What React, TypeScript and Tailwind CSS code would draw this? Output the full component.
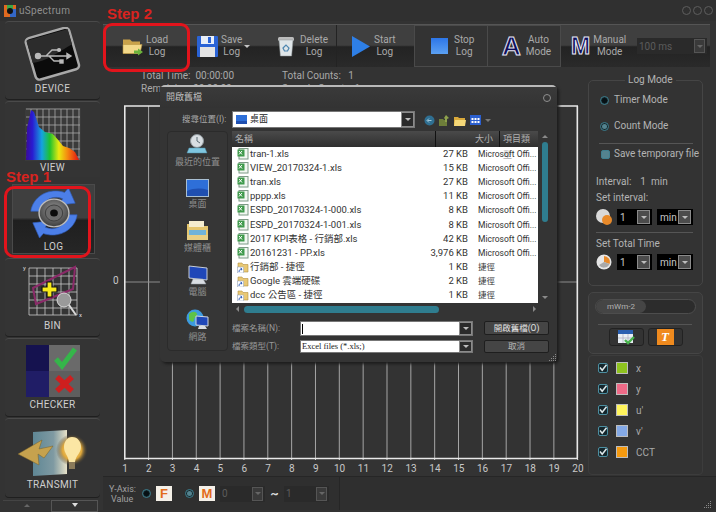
import type { ReactNode } from "react";

const uiFont = "font-['Roboto','Noto_Sans_CJK_TC',sans-serif]";

const files = [
  { name: "tran-1.xls", size: "27 KB", kind: "Microsoft Offi..." },
  { name: "VIEW_20170324-1.xls", size: "15 KB", kind: "Microsoft Offi..." },
  { name: "tran.xls", size: "27 KB", kind: "Microsoft Offi..." },
  { name: "pppp.xls", size: "11 KB", kind: "Microsoft Offi..." },
  { name: "ESPD_20170324-1-000.xls", size: "8 KB", kind: "Microsoft Offi..." },
  { name: "ESPD_20170324-1-001.xls", size: "8 KB", kind: "Microsoft Offi..." },
  { name: "2017 KPI表格 - 行銷部.xls", size: "42 KB", kind: "Microsoft Offi..." },
  { name: "20161231 - PP.xls", size: "3,976 KB", kind: "Microsoft Offi..." },
  { name: "行銷部 - 捷徑", size: "1 KB", kind: "捷徑", link: true },
  { name: "Google 雲端硬碟", size: "2 KB", kind: "捷徑", link: true },
  { name: "dcc 公告區 - 捷徑", size: "1 KB", kind: "捷徑", link: true },
];

const ticks = Array.from({ length: 20 }, (_, i) => i + 1);

function XlsIcon() {
  return (
    <svg width="12" height="12" viewBox="0 0 12 12" className="shrink-0">
      <rect x="2" y="0.5" width="9" height="10.5" fill="#f2f7f2" stroke="#7d9a86" />
      <rect x="0.5" y="1.5" width="7" height="7" fill="#3f9a4c" />
      <path d="M2 3l3 3.5M5 3L2 6.5" stroke="#fff" strokeWidth="1" />
    </svg>
  );
}

function LinkIcon() {
  return (
    <svg width="12" height="13" viewBox="0 0 12 13" className="shrink-0">
      <path d="M1 3h4l1 1.5h5V12H1z" fill="#e9c874" stroke="#b3913f" strokeWidth="0.6" />
      <rect x="0.5" y="7" width="6" height="6" fill="#fff" stroke="#8ca0c0" strokeWidth="0.5" />
      <path d="M2 12c0-2 1-3 3-3M5 9l-1.4-.8M5 9l-.8 1.4" stroke="#1d4fb8" strokeWidth="0.9" fill="none" />
    </svg>
  );
}

function ComboArrow({ dark }: { dark?: boolean }) {
  return (
    <span className={`flex h-full w-[13px] shrink-0 items-center justify-center border border-[#8b8b8b] ${dark ? "bg-[#2b2b2b]" : "bg-[#4c4c4c]"}`}>
      <span className="h-0 w-0 border-x-[3px] border-t-[3px] border-x-transparent border-t-[#bdbdbd]" />
    </span>
  );
}

function BlackCombo({ value, w, h = "h-[16px]" }: { value: string; w: string; h?: string }) {
  return (
    <div className={`flex ${w} ${h} items-center justify-between bg-black pl-[3px] pr-[2px] py-[1px] text-[10px] text-[#c8c8c8]`}>
      <span>{value}</span>
      <ComboArrow />
    </div>
  );
}

function DimCombo({ value, w }: { value: string; w: string }) {
  return (
    <div className={`flex ${w} h-[16px] items-center justify-between bg-[#2a2a2a] pl-[2px] pr-[2px] py-[1px] text-[10px] text-[#5c5c5c]`}>
      <span>{value}</span>
      <span className="flex h-full w-[11px] items-center justify-center border border-[#555] bg-[#3a3a3a]">
        <span className="h-0 w-0 border-x-[3px] border-t-[3px] border-x-transparent border-t-[#666]" />
      </span>
    </div>
  );
}

function Radio({ on }: { on?: boolean }) {
  return (
    <span className="flex h-[9px] w-[9px] shrink-0 items-center justify-center rounded-full border border-[#3f7f8f] bg-[#17272c]">
      <span className={`h-[5px] w-[5px] rounded-full ${on ? "bg-[#061014]" : "bg-[#54838f]"}`} />
    </span>
  );
}

function CheckMark() {
  return (
    <svg width="10" height="10" viewBox="0 0 10 10" className="shrink-0">
      <rect x="0.5" y="0.5" width="9" height="9" rx="1.5" fill="#14262c" stroke="#4c8ea0" />
      <path d="M2 4.5l2.2 2.8L8.5 1.8" stroke="#dfe8ea" strokeWidth="1.5" fill="none" />
    </svg>
  );
}

function Grip() {
  return (
    <svg width="8" height="8" viewBox="0 0 8 8" className="absolute">
      <path d="M6 0h1v1H6zM4 2h1v1H4zM6 2h1v1H6zM2 4h1v1H2zM4 4h1v1H4zM6 4h1v1H6zM0 6h1v1H0zM2 6h1v1H2zM4 6h1v1H4zM6 6h1v1H6z" fill="#8a8a8a" />
    </svg>
  );
}

function DeviceIcon() {
  return (
    <svg width="58" height="54" viewBox="0 0 58 54">
      <g transform="rotate(-16 29 27)">
        <rect x="6" y="5" width="45" height="43" rx="4" fill="#0b0b0b" stroke="#a9a9a9" strokeWidth="2.5" />
        <path d="M7 7h43v16C36 26 20 33 7 30z" fill="#2c2c2c" />
      </g>
      <g stroke="#b9b9b9" strokeWidth="1.4" fill="#b9b9b9">
        <path d="M15 29h28M22 29l6-6h6M25 29l5 5h6" fill="none" />
        <circle cx="14" cy="29" r="2.5" />
        <circle cx="35" cy="23" r="1.4" />
        <rect x="36" y="33" width="3" height="3" />
        <path d="M43 26.5l4 2.5-4 2.5z" />
      </g>
    </svg>
  );
}

function ViewIcon() {
  return (
    <svg width="56" height="53" viewBox="0 0 56 53">
      <defs>
        <linearGradient id="spec" x1="0" x2="1" y1="0" y2="0">
          <stop offset="0" stopColor="#3a0a9a" />
          <stop offset="0.12" stopColor="#2a1ad0" />
          <stop offset="0.3" stopColor="#14a4e0" />
          <stop offset="0.45" stopColor="#1ec22e" />
          <stop offset="0.62" stopColor="#e8ea10" />
          <stop offset="0.78" stopColor="#f58a10" />
          <stop offset="1" stopColor="#e01010" />
        </linearGradient>
      </defs>
      <rect width="56" height="53" fill="#3a3a3a" />
      <path d="M6 52V1M12 52V1M18 52V1M24 52V1M30 52V1M36 52V1M42 52V1M48 52V1M54 52V1M1 1H55M1 9H55M1 17H55M1 25H55M1 33H55M1 41H55M1 49H55" stroke="#a8a8a8" strokeWidth="0.8" />
      <path d="M1 52L2 20L6 2L9 4L14 19L20 24L28 26L34 33L38 38L44 40L50 44L54 52z" fill="url(#spec)" />
    </svg>
  );
}

function LogIcon() {
  return (
    <svg width="54" height="50" viewBox="0 0 56 56" preserveAspectRatio="none">
      <defs>
        <radialGradient id="lens" cx="0.5" cy="0.4" r="0.6">
          <stop offset="0" stopColor="#9a9a9a" />
          <stop offset="1" stopColor="#3d3d3d" />
        </radialGradient>
      </defs>
      <path d="M4 26C6 10 22 -1 39 5L43 0L50 17L33 19L37 12C25 7 16 15 14 26z" fill="#4c7fe8" stroke="#2f5bb8" strokeWidth="0.7" />
      <path d="M52 30C50 46 34 57 17 51L13 56L6 39L23 37L19 44C31 49 40 41 42 30z" fill="#4c7fe8" stroke="#2f5bb8" strokeWidth="0.7" />
      <circle cx="28" cy="28" r="15.5" fill="url(#lens)" stroke="#bcbcbc" strokeWidth="1.5" />
      <circle cx="28" cy="28" r="9" fill="#6c6c6c" stroke="#3b3b3b" />
      <circle cx="28" cy="28" r="4" fill="#0c0c0c" />
    </svg>
  );
}

function BinIcon() {
  return (
    <svg width="62" height="54" viewBox="0 0 62 54">
      <path d="M7 3V50M15 3V50M23 3V50M31 3V50M39 3V50M47 3V50M55 3V50M7 3H55M7 11H55M7 19H55M7 27H55M7 35H55M7 43H55M7 50H55" stroke="#c9c9c9" strokeWidth="0.8" />
      <path d="M11 23L53 2L51 24L14 39z" fill="none" stroke="#8a2a68" strokeWidth="2" />
      <path d="M20 25h5v-5h5v5h5v5h-5v5h-5v-5h-5z" fill="#f7ea1b" stroke="#111" strokeWidth="1.2" transform="translate(0 -3)" />
      <circle cx="42" cy="35" r="7" fill="#9a9a9a" stroke="#d8d8d8" strokeWidth="1" />
      <path d="M47 40l7 10" stroke="#d8d8d8" strokeWidth="2" />
      <text x="1" y="5" fontSize="6" fill="#ddd">y</text>
      <text x="57" y="52" fontSize="6" fill="#ddd">x</text>
    </svg>
  );
}

function CheckerIcon() {
  return (
    <svg width="54" height="52" viewBox="0 0 54 52">
      <rect width="23" height="26" fill="#15124f" />
      <rect y="26" width="23" height="26" fill="#201d66" />
      <rect x="23" width="31" height="26" fill="#6a6a6a" />
      <rect x="23" y="26" width="31" height="26" fill="#5e5e5e" />
      <path d="M30 14l6 7L49 4" stroke="#35b54a" strokeWidth="5" fill="none" />
      <path d="M31 32l15 14M46 32L31 46" stroke="#cf1f1f" strokeWidth="5.5" />
    </svg>
  );
}

function TransmitIcon() {
  return (
    <svg width="72" height="50" viewBox="0 0 72 50">
      <defs>
        <radialGradient id="glow">
          <stop offset="0" stopColor="#ffe79a" />
          <stop offset="0.6" stopColor="#e0a83a" />
          <stop offset="1" stopColor="#333" stopOpacity="0" />
        </radialGradient>
        <linearGradient id="door" x1="0" x2="1">
          <stop offset="0" stopColor="#5f8795" />
          <stop offset="0.6" stopColor="#7f9aa2" />
          <stop offset="1" stopColor="#e8e2c8" />
        </linearGradient>
      </defs>
      <path d="M16 3L50 1V45L16 47z" fill="url(#door)" />
      <circle cx="55" cy="21" r="16" fill="url(#glow)" />
      <path d="M55 8c6 0 9 5 9 10 0 6-5 8-6 15h-6c-1-7-5-9-5-15 0-5 3-10 8-10z" fill="#fbe6a4" />
      <rect x="52" y="33" width="6" height="7" fill="#8a7a5a" />
      <path d="M1 25L25 11L22 20L36 17L27 29L21 25L22 36z" fill="#c6a24e" stroke="#77602a" strokeWidth="0.5" />
    </svg>
  );
}

function NavButton({ label, icon, h, pt, pb }: { label: string; icon: ReactNode; h: string; pt: string; pb: string }) {
  return (
    <div className={`flex ${h} ${pt} ${pb} flex-col items-center justify-between rounded-[4px] border-t border-[#4a4a4a] bg-[#343434] shadow-[0_1px_0_#1f1f1f]`}>
      {icon}
      <span className="text-[10px] leading-[12px] tracking-[0.3px] text-[#cfcfcf]">{label}</span>
    </div>
  );
}

function ToolText({ a, b }: { a: string; b: string }) {
  return (
    <span className="flex flex-col items-center text-[10px] leading-[12px] text-[#a9a9a9]">
      <span>{a}</span>
      <span>{b}</span>
    </span>
  );
}

function Toolbar() {
  return (
    <div className="mr-[6px] mt-[3px] flex h-[43px] items-stretch border-t border-[#555] bg-[linear-gradient(#3f3f3f_0%,#3f3f3f_48%,#232323_52%,#2a2a2a_100%)] text-[#a9a9a9]">
      <div className="ml-[19px] flex w-[60px] items-center gap-[2px]">
        <svg width="22" height="19" viewBox="0 0 22 18">
          <path d="M1 2h7l2 2h8v12H1z" fill="#c9a24a" />
          <path d="M1 7h19l-2 9H1z" fill="#f3d98a" stroke="#b9933f" strokeWidth="0.6" />
          <path d="M12 13h4v-2l5 3.5-5 3.5v-2h-4z" fill="#6cb43c" />
        </svg>
        <ToolText a="Load" b="Log" />
      </div>
      <div className="ml-[15px] flex w-[60px] items-center gap-[3px]">
        <svg width="21" height="21" viewBox="0 0 21 21">
          <rect width="21" height="21" rx="1" fill="#2a63d6" />
          <rect x="4" y="0" width="13" height="8" fill="#e8eef8" />
          <rect x="11" y="1" width="3" height="6" fill="#2a63d6" />
          <rect x="3" y="11" width="15" height="10" fill="#e4e4e4" />
        </svg>
        <ToolText a="Save" b="Log" />
        <span className="ml-[-1px] h-0 w-0 border-x-[3px] border-t-[3px] border-x-transparent border-t-[#c5c5c5]" />
      </div>
      <div className="ml-[20px] flex w-[62px] items-center gap-[5px]">
        <svg width="18" height="22" viewBox="0 0 18 22">
          <rect x="1" y="2" width="16" height="4" rx="1.5" fill="#bcbcbc" />
          <path d="M2 5h14l-1.4 16H3.4z" fill="#dfe5e8" stroke="#8f9699" strokeWidth="0.5" />
          <path d="M6 13l3-3 3 3-1.5 3h-3z" fill="none" stroke="#4e86b0" strokeWidth="1.2" />
        </svg>
        <ToolText a="Delete" b="Log" />
      </div>
      <span className="ml-[-3px] w-px bg-[#232323]" />
      <div className="ml-[15px] flex w-[62px] items-center gap-[4px]">
        <svg width="18" height="21" viewBox="0 0 18 21">
          <path d="M0 0l18 10.5L0 21z" fill="#2e7fe6" />
        </svg>
        <ToolText a="Start" b="Log" />
      </div>
      <div className="flex w-[74px] items-center gap-[6px] border border-[#4a4a4a] bg-[#333] pl-[16px]">
        <span className="h-[16px] w-[17px] bg-[linear-gradient(#2d76e8,#5ba0f2)]" />
        <ToolText a="Stop" b="Log" />
      </div>
      <div className="flex w-[73px] items-center gap-[5px] border border-l-0 border-[#4a4a4a] bg-[#333] pl-[14px]">
        <span className="font-['Liberation_Sans',sans-serif] text-[26px] font-bold leading-none text-[#0d0d5a] [-webkit-text-stroke:1px_#e8e8f5]">A</span>
        <ToolText a="Auto" b="Mode" />
      </div>
      <div className="ml-[10px] flex w-[66px] items-center gap-[3px]">
        <span className="font-['Liberation_Sans',sans-serif] text-[23px] font-bold leading-none text-[#0d0d5a] [-webkit-text-stroke:1px_#e8e8f5]">M</span>
        <ToolText a="Manual" b="Mode" />
      </div>
      <div className="flex items-center">
        <DimCombo value="100 ms" w="w-[70px]" />
      </div>
    </div>
  );
}

function Chart() {
  return (
    <div className="relative ml-[21px] mt-[10px] h-[355px] w-[455px]">
      <svg width="455" height="355" viewBox="0 0 455 355" className="block">
        {ticks.map((t) => (
          <line key={t} x1={0.75 + (t - 1) * 23.84} x2={0.75 + (t - 1) * 23.84} y1="1" y2="353" stroke="#a6a6a6" strokeWidth="1" />
        ))}
        <line x1="0" x2="453" y1="177" y2="177" stroke="#8c8c8c" />
        <rect x="0.75" y="1" width="452.5" height="352.5" fill="none" stroke="#e8e8e8" strokeWidth="1.5" />
        {ticks.map((t) => (
          <line key={t} x1={0.75 + (t - 1) * 23.84} x2={0.75 + (t - 1) * 23.84} y1="354" y2="356" stroke="#ddd" />
        ))}
      </svg>
      <span className="absolute left-[-11px] top-[170px] text-[10px] leading-[12px] text-[#c8c8c8]">0</span>
      <div className="absolute left-0 top-[357px] h-[14px] w-full">
        {ticks.map((t) => (
          <span
            key={t}
            className="absolute w-[20px] -translate-x-1/2 text-center text-[10px] leading-[14px] text-[#c8c8c8]"
            style={{ left: (t - 1) * 23.84 + 1 }}
          >
            {t}
          </span>
        ))}
      </div>
    </div>
  );
}

function RightPanel() {
  const series = [
    { name: "x", color: "bg-[#8fc31f]" },
    { name: "y", color: "bg-[#ee6a87]" },
    { name: "u'", color: "bg-[#fff45c]" },
    { name: "v'", color: "bg-[#84a9e6]" },
    { name: "CCT", color: "bg-[#f59a10]" },
  ];
  return (
    <div className="ml-[-1px] flex w-[115px] flex-col pt-[13px] text-[10px] text-[#b3b3b3]">
      <div className="relative h-[206px] rounded-[5px] border border-[#454545] px-[7px]">
        <span className="absolute left-[36px] top-[-8px] bg-[#333] px-[3px] leading-[14px]">Log Mode</span>
        <div className="ml-[4px] mt-[13px] flex items-center gap-[5px] leading-[12px]">
          <Radio on />
          <span>Timer Mode</span>
        </div>
        <div className="ml-[4px] mt-[14px] flex items-center gap-[5px] leading-[12px]">
          <Radio />
          <span>Count Mode</span>
        </div>
        <div className="ml-[3px] mt-[11px] h-px w-[94px] bg-[#555]" />
        <div className="ml-[5px] mt-[4px] flex items-center gap-[4px] leading-[12px]">
          <span className="h-[9px] w-[9px] shrink-0 rounded-[2px] border border-[#3f7f8f] bg-[#54838f]" />
          <span className="whitespace-nowrap">Save temporary file</span>
        </div>
        <div className="mt-[16px] flex gap-[9px] leading-[12px]">
          <span>Interval:</span>
          <span>1&nbsp; min</span>
        </div>
        <div className="mt-[4px] leading-[12px]">Set interval:</div>
        <div className="mt-[5px] flex items-center gap-[5px]">
          <svg width="16" height="16" viewBox="0 0 16 16" className="shrink-0">
            <circle cx="7" cy="7" r="7" fill="#d9d9d9" />
            <circle cx="11" cy="11" r="5" fill="#e88a2a" />
          </svg>
          <BlackCombo value="1" w="w-[35px]" />
          <BlackCombo value="min" w="w-[36px]" />
        </div>
        <div className="mt-[7px] h-px w-[97px] bg-[#555]" />
        <div className="mt-[5px] leading-[12px]">Set Total Time</div>
        <div className="mt-[4px] flex items-center gap-[5px]">
          <svg width="16" height="16" viewBox="0 0 16 16" className="shrink-0">
            <circle cx="8" cy="8" r="7.5" fill="#e6e6e6" />
            <path d="M8 8V2a6 6 0 0 1 5.5 8z" fill="#e88a2a" />
            <path d="M8 8l5.5 2A6 6 0 0 1 3 11z" fill="#a9a9a9" />
          </svg>
          <BlackCombo value="1" w="w-[35px]" />
          <BlackCombo value="min" w="w-[36px]" />
        </div>
      </div>
      <div className="mt-[6px] h-[62px] rounded-[5px] border border-[#454545] bg-[#383838] px-[6px] pt-[6px]">
        <div className="h-[15px] w-[101px] rounded-full border border-[#4d4d4d] bg-[#2c2c2c]">
          <div className="flex h-full w-[50px] items-center justify-center rounded-full bg-[#454545] text-[8px] text-[#b3b3b3]">mWm-2</div>
        </div>
        <div className="mt-[10px] h-px w-[94px] translate-x-[3px] bg-[#555]" />
        <div className="mt-[3px] flex justify-center gap-[4px]">
          <div className="flex h-[18px] w-[35px] items-center justify-center rounded-[3px] border border-[#222] bg-[#333]">
            <svg width="17" height="15" viewBox="0 0 17 15">
              <rect width="15" height="13" fill="#e8eef4" />
              <rect width="15" height="4" fill="#2a5fb0" />
              <path d="M5 4v9M10 4v9M0 8h15" stroke="#aab" strokeWidth="0.7" />
              <path d="M7 10l3 3 6-6" stroke="#47b34c" strokeWidth="2.4" fill="none" />
            </svg>
          </div>
          <div className="flex h-[18px] w-[35px] items-center justify-center rounded-[3px] border border-[#222] bg-[#333]">
            <span className="flex h-[16px] w-[17px] items-center justify-center bg-[#ef8a1e] font-['Liberation_Serif',serif] text-[13px] font-bold italic text-white">T</span>
          </div>
        </div>
      </div>
      <div className="mt-[1px] flex h-[120px] flex-col gap-[9px] rounded-[4px] border border-[#3c3c3c] pl-[9px] pt-[6px]">
        {series.map((s) => (
          <div key={s.name} className="flex h-[12px] items-center">
            <CheckMark />
            <span className={`ml-[8px] h-[12px] w-[12px] border border-[#bdbdbd] ${s.color}`} />
            <span className="ml-[8px] text-[10px] text-[#a9a9a9]">{s.name}</span>
          </div>
        ))}
      </div>
    </div>
  );
}

function BottomBar() {
  return (
    <div className="flex h-[34px] items-center border-t border-[#262626] bg-[#2f2f2f] pl-[6px]">
      <div className="flex w-[33px] flex-col text-[9px] leading-[10px] text-[#a0a0a0]">
        <span>Y-Axis:</span>
        <span className="pl-[2px]">Value</span>
      </div>
      <Radio on />
      <span className="ml-[5px] flex h-[15px] w-[16px] items-center justify-center bg-[#f4f0e8] font-['Liberation_Sans',sans-serif] text-[13px] font-bold text-[#e36c1a]">F</span>
      <span className="ml-[13px]"><Radio /></span>
      <span className="ml-[5px] flex h-[15px] w-[16px] items-center justify-center bg-[#f4f0e8] font-['Liberation_Sans',sans-serif] text-[13px] font-bold text-[#e36c1a]">M</span>
      <span className="ml-[5px]"><DimCombo value="0" w="w-[45px]" /></span>
      <span className="w-[19px] text-center text-[13px] font-bold leading-none text-[#ddd]">~</span>
      <DimCombo value="1" w="w-[45px]" />
      <span className="ml-[10px] h-full w-px bg-[#262626]" />
    </div>
  );
}

function PlaceIcon({ kind }: { kind: string }) {
  if (kind === "recent") {
    return (
      <svg width="22" height="21" viewBox="0 0 22 21">
        <circle cx="11" cy="7" r="6.5" fill="#d8dee2" stroke="#8e979c" />
        <path d="M11 3v4l3 2" stroke="#5b6a72" fill="none" />
        <path d="M3 14h16l2 5H1z" fill="#7fc6e0" stroke="#4f8ca4" strokeWidth="0.5" />
      </svg>
    );
  }
  if (kind === "desktop") {
    return (
      <svg width="23" height="18" viewBox="0 0 23 18">
        <rect x="0.5" y="0.5" width="22" height="17" fill="#2e6fd8" stroke="#a9bfd2" />
        <path d="M1 12c7-3 14-3 21-1v6H1z" fill="#1f4fb0" />
      </svg>
    );
  }
  if (kind === "library") {
    return (
      <svg width="23" height="20" viewBox="0 0 23 20">
        <path d="M1 3h8l2 2h11v14H1z" fill="#e5c66e" />
        <rect x="3" y="0" width="15" height="6" fill="#f5edcf" />
        <rect x="3" y="9" width="17" height="10" fill="#6fb3d9" />
        <rect x="1" y="14" width="21" height="5" fill="#e8cf84" />
      </svg>
    );
  }
  if (kind === "computer") {
    return (
      <svg width="22" height="20" viewBox="0 0 22 20">
        <path d="M2 1l18 2v12L2 13z" fill="#1f47b8" stroke="#c6ccd6" />
        <path d="M6 14h10l3 5H4z" fill="#d9dde2" stroke="#9aa0a8" strokeWidth="0.5" />
      </svg>
    );
  }
  return (
    <svg width="23" height="21" viewBox="0 0 23 21">
      <circle cx="9" cy="9" r="8.5" fill="#3d9be0" />
      <path d="M3 5c3-3 7-3 8 0s-3 3-3 6-4 2-5-1z" fill="#5ec24a" />
      <path d="M10 7l12 1v9l-12-1z" fill="#1f47b8" stroke="#d0d6de" />
      <path d="M13 17h6l2 3h-9z" fill="#d9dde2" />
    </svg>
  );
}

function Dialog() {
  const places = [
    { kind: "recent", label: "最近的位置" },
    { kind: "desktop", label: "桌面" },
    { kind: "library", label: "媒體櫃" },
    { kind: "computer", label: "電腦" },
    { kind: "network", label: "網路" },
  ];
  return (
    <div className="absolute left-[160px] top-[85px] flex h-[277px] w-[397px] flex-col rounded-[5px] border-t-2 border-[#b9b9b9] bg-[#343434] shadow-[2px_2px_3px_#1c1c1c]">
      <div className="flex h-[21px] items-center justify-between bg-[linear-gradient(#3a3a3a,#333)] pl-[6px] pr-[6px] text-[9px] text-[#bdbdbd]">
        <span>開啟舊檔</span>
        <span className="h-[8px] w-[8px] rounded-full border border-[#8f8f8f]" />
      </div>
      <div className="flex h-[23px] items-start pl-[22px] pt-[3px]">
        <span className="w-[50px] whitespace-nowrap pt-[2px] text-[8.5px] leading-[13px] text-[#a9a9a9]">搜尋位置(I):</span>
        <div className="flex h-[17px] w-[183px] items-center gap-[3px] border border-[#777] bg-white pl-[3px]">
          <svg width="11" height="9" viewBox="0 0 11 9">
            <rect width="11" height="9" fill="#2e6fd8" />
            <rect y="6" width="11" height="3" fill="#1f4fb0" />
          </svg>
          <span className="flex-1 text-[9px] text-[#222]">桌面</span>
          <ComboArrow dark />
        </div>
        <div className="ml-[9px] flex items-center gap-[4px] pt-[3px]">
          <svg width="11" height="11" viewBox="0 0 11 11">
            <circle cx="5.5" cy="5.5" r="5" fill="#2f6f92" />
            <path d="M7.5 5.5h-4M5 3.5l-2 2 2 2" stroke="#9fc6d8" fill="none" />
          </svg>
          <svg width="11" height="12" viewBox="0 0 11 12">
            <path d="M0 5h4l1 1h3v6H0z" fill="#6e7e3a" />
            <path d="M7 1l3 3-2 1v3H6V5L5 4z" fill="#8fa24c" />
          </svg>
          <svg width="12" height="11" viewBox="0 0 12 11">
            <path d="M0 2h4l1 1h6v8H0z" fill="#d9a93a" />
            <path d="M1 5h11l-1 6H0z" fill="#f5d878" />
          </svg>
          <svg width="11" height="10" viewBox="0 0 11 10">
            <rect width="11" height="10" fill="#2a5fd0" />
            <path d="M1.5 3h2v2h-2zM4.5 3h2v2h-2zM7.5 3h2v2h-2zM1.5 6h2v2h-2zM4.5 6h2v2h-2zM7.5 6h2v2h-2z" fill="#fff" />
          </svg>
          <span className="h-0 w-0 border-x-[3px] border-t-[3px] border-x-transparent border-t-[#777]" />
        </div>
      </div>
      <div className="flex">
        <div className="ml-[7px] flex h-[220px] w-[61px] flex-col items-center gap-[11px] rounded-[4px] border border-[#2b2b2b] bg-[#363636] pt-[2px]">
          {places.map((p) => (
            <div key={p.kind} className="flex flex-col items-center text-[9px] leading-[12px] text-[#8f8f8f]">
              <PlaceIcon kind={p.kind} />
              <span className="mt-[1px]">{p.label}</span>
            </div>
          ))}
        </div>
        <div className="ml-[4px] flex w-[319px] flex-col">
          <div className="flex">
            <div className="w-[306px]">
              <div className="flex h-[16px] bg-[linear-gradient(#4a4a4a,#2f2f2f)] text-[9px] leading-[16px] text-[#b0b0b0]">
                <span className="w-[204px] border-r border-[#111] pl-[3px]">名稱</span>
                <span className="w-[64px] border-r border-[#111] pr-[6px] text-right">大小</span>
                <span className="flex-1 pl-[3px]">項目類型</span>
              </div>
              <div className="h-[156px] overflow-hidden bg-white">
                {files.map((f) => (
                  <div key={f.name} className="flex h-[14.1px] items-center text-[9.5px] leading-[14px] text-[#333]">
                    <span className="ml-[5px] flex w-[171px] shrink-0 items-center gap-[1px] whitespace-nowrap">
                      {f.link ? <LinkIcon /> : <XlsIcon />}
                      {f.name}
                    </span>
                    <span className="w-[60px] shrink-0 text-right">{f.size}</span>
                    <span className="ml-[10px] whitespace-nowrap text-[8.5px]">{f.kind}</span>
                  </div>
                ))}
              </div>
            </div>
            <div className="ml-[2px] flex w-[10px] flex-col items-center">
              <span className="mt-[4px] h-0 w-0 border-x-[3px] border-b-[3px] border-x-transparent border-b-[#8a8a8a]" />
              <span className="mt-[4px] h-[80px] w-[6px] rounded-full bg-[#2f7d8f]" />
              <span className="mt-auto mb-[4px] h-0 w-0 border-x-[3px] border-t-[3px] border-x-transparent border-t-[#8a8a8a]" />
            </div>
          </div>
          <div className="flex h-[12px] w-[306px] items-center">
            <span className="ml-[4px] h-0 w-0 border-y-[3px] border-r-[3px] border-y-transparent border-r-[#8a8a8a]" />
            <span className="ml-[5px] h-[7px] w-[195px] rounded-full bg-[#2f7d8f]" />
            <span className="ml-auto mr-[2px] h-0 w-0 border-y-[3px] border-l-[3px] border-y-transparent border-l-[#8a8a8a]" />
          </div>
          <div className="mt-[6px] grid grid-cols-[68px_173px_1fr] grid-rows-[15px_13px] gap-y-[4px] text-[8.5px] text-[#9a9a9a]">
            <span className="leading-[15px]">檔案名稱(N):</span>
            <div className="flex items-center justify-between border border-[#777] bg-white pl-[1px]">
              <span className="h-[10px] w-px bg-black" />
              <ComboArrow dark />
            </div>
            <span className="ml-[11px] flex h-[14px] w-[65px] items-center justify-center rounded-[2px] border border-[#1e1e1e] bg-[#454545] text-[#e0e0e0]">開啟舊檔(O)</span>
            <span className="leading-[13px]">檔案類型(T):</span>
            <div className="flex items-center justify-between border border-[#777] bg-white pl-[1px] font-['Liberation_Serif',serif] text-[8.5px] text-[#222]">
              <span>Excel files (*.xls;)</span>
              <ComboArrow dark />
            </div>
            <span className="ml-[11px] flex h-[13px] w-[65px] items-center justify-center rounded-[2px] border border-[#1e1e1e] bg-[#454545] text-[#b5b5b5]">取消</span>
          </div>
        </div>
      </div>
      <span className="absolute bottom-[8px] right-[8px]"><Grip /></span>
    </div>
  );
}

export default function App() {
  return (
    <div className={`relative flex h-[512px] w-[716px] flex-col overflow-hidden bg-[#333] ${uiFont}`}>
      <div className="flex h-[21px] items-center justify-between bg-[#303030] pl-[4px] pr-[3px]">
        <div className="flex items-center gap-[3px]">
          <svg width="12" height="12" viewBox="0 0 12 12">
            <rect width="12" height="12" fill="#e06a20" />
            <rect x="3" y="0" width="6" height="6" fill="#3aa84a" />
            <rect x="6" y="4" width="6" height="8" fill="#3367c8" />
            <circle cx="6" cy="6" r="3" fill="#111" />
          </svg>
          <span className="text-[10px] tracking-[0.3px] text-[#8f8f8f]">uSpectrum</span>
        </div>
        <div className="flex gap-[2px]">
          <span className="h-[9px] w-[9px] rounded-full border border-[#5e5e5e]" />
          <span className="h-[9px] w-[9px] rounded-full border border-[#5e5e5e]" />
          <span className="h-[9px] w-[9px] rounded-full border border-[#5e5e5e]" />
        </div>
      </div>

      <div className="flex flex-1">
        <div className="flex w-[103px] flex-col pl-[5px] pr-[3px]">
          <NavButton label="DEVICE" icon={<DeviceIcon />} h="h-[78px]" pt="pt-[5px]" pb="pb-[4px]" />
          <div className="mt-[2px] flex h-[76px] flex-col items-center justify-between rounded-t-[4px] border-t border-[#4a4a4a] bg-[#343434] pt-[6px] pb-[3px]">
            <ViewIcon />
            <span className="text-[10px] leading-[12px] tracking-[0.3px] text-[#cfcfcf]">VIEW</span>
          </div>
          <div className="ml-[7px] mt-[7px] flex h-[70px] w-[83px] flex-col items-center justify-between border border-[#4a4a4a] bg-[linear-gradient(#3f3f3f_0%,#3f3f3f_48%,#1f1f1f_52%,#262626_100%)] pt-[3px]">
            <LogIcon />
            <span className="text-[10px] leading-[12px] tracking-[0.3px] text-[#cfcfcf]">LOG</span>
          </div>
          <div className="mt-[4px]">
            <NavButton label="BIN" icon={<BinIcon />} h="h-[78px]" pt="pt-[6px]" pb="pb-[4px]" />
          </div>
          <div className="mt-[2px]">
            <NavButton label="CHECKER" icon={<CheckerIcon />} h="h-[78px]" pt="pt-[6px]" pb="pb-[5px]" />
          </div>
          <div className="mt-[2px]">
            <NavButton label="TRANSMIT" icon={<TransmitIcon />} h="h-[79px]" pt="pt-[10px]" pb="pb-[6px]" />
          </div>
          <div className="ml-[-2px] mt-[3px] flex gap-[1px]">
            <span className="flex h-[12px] w-[47px] justify-center border-t border-[#444] pt-[3px]">
              <span className="h-0 w-0 border-x-[3px] border-b-[3px] border-x-transparent border-b-[#666]" />
            </span>
            <span className="flex h-[12px] w-[47px] justify-center border border-[#555] pt-[2px]">
              <span className="h-0 w-0 border-x-[3px] border-t-[4px] border-x-transparent border-t-[#ddd]" />
            </span>
          </div>
        </div>

        <div className="flex flex-1 flex-col">
          <Toolbar />
          <div className="flex h-[409px]">
            <div className="w-[486px]">
              <div className="grid grid-cols-[141px_1fr] pl-[38px] pt-[2px] text-[10px] leading-[13px] text-[#a9a9a9]">
                <span>Total Time:&nbsp; 00:00:00</span>
                <span>Total Counts:&nbsp;&nbsp; 1</span>
                <span>Remaining: 00:00:00</span>
                <span>Sample Counts: 1</span>
              </div>
              <Chart />
            </div>
            <RightPanel />
          </div>
          <BottomBar />
        </div>
      </div>

      <Dialog />

      <span className="absolute bottom-[3px] right-[4px] h-[8px] w-[8px]"><Grip /></span>
      <div className="absolute left-[103px] top-[23px] h-[49px] w-[87px] rounded-[9px] border-[3px] border-[#e2141c]" />
      <div className="absolute left-[4px] top-[186px] h-[72px] w-[87px] rounded-[10px] border-[3px] border-[#e2141c]" />
      <span className="absolute left-[107px] top-[3px] font-['Liberation_Sans',sans-serif] text-[15px] font-bold text-[#d9231f]">Step 2</span>
      <span className="absolute left-[6px] top-[166px] font-['Liberation_Sans',sans-serif] text-[15px] font-bold text-[#d9231f]">Step 1</span>
    </div>
  );
}
